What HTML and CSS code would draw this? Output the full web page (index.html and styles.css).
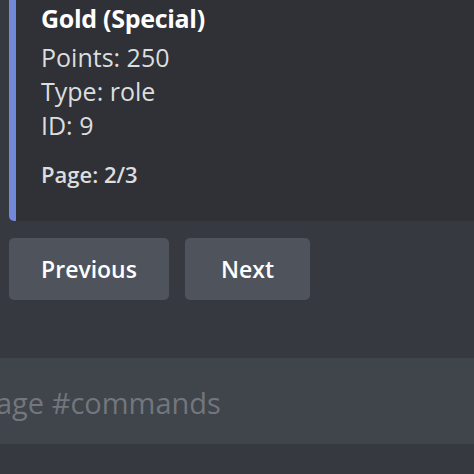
FILE: index.html
```html
<!DOCTYPE html>
<html lang="en">
<head>
  <meta charset="UTF-8">
  <meta name="viewport" content="width=device-width, initial-scale=1.0">
  <title>Shop</title>
  <link rel="stylesheet" href="styles.css">
</head>
<body>
  <div class="embed">
    <div class="embed-title">Gold (Special)</div>
    <div class="embed-fields">
      <div>Points: 250</div>
      <div>Type: role</div>
      <div>ID: 9</div>
    </div>
    <div class="embed-footer">Page: 2/3</div>
  </div>

  <div class="buttons">
    <button class="btn btn-prev">Previous</button>
    <button class="btn btn-next">Next</button>
  </div>

  <div class="composer">
    <span class="placeholder">Message #commands</span>
  </div>
</body>
</html>
```

FILE: styles.css
```css
body {
  font-family: "Open Sans", "Noto Sans", sans-serif;
  background: #36393f;
  margin: 0;
  padding: 0;
  width: 474px;
  height: 474px;
  overflow: hidden;
}
.embed {
  margin-left: 9px;
  height: 221px;
  box-sizing: border-box;
  background: #2f3136;
  border-left: 7px solid #7289da;
  border-radius: 0 0 0 5px;
  padding: 0 0 0 25px;
}
.embed-title {
  color: #ffffff;
  font-weight: 700;
  font-size: 25px;
  letter-spacing: -0.3px;
  line-height: 36px;
}
.embed-fields {
  margin-top: 4px;
  color: #dcddde;
  font-size: 25px;
  line-height: 34px;
}
.embed-footer {
  margin-top: 17px;
  color: #dcddde;
  font-weight: 600;
  font-size: 22px;
  line-height: 30px;
}
.buttons {
  display: flex;
  gap: 16px;
  margin: 17px 0 0 9px;
}
.btn {
  height: 62px;
  border: none;
  border-radius: 5px;
  background: #4f545c;
  color: #ffffff;
  font-family: inherit;
  font-weight: 600;
  font-size: 23px;
  padding: 0;
  cursor: pointer;
}
.btn-prev {
  width: 160px;
}
.btn-next {
  width: 125px;
}
.composer {
  margin-top: 58px;
  height: 86px;
  padding-top: 3px;
  box-sizing: border-box;
  background: #40444b;
  display: flex;
  align-items: center;
  overflow: hidden;
}
.placeholder {
  margin-left: -74px;
  color: #72767d;
  font-size: 29px;
  white-space: nowrap;
}
```
